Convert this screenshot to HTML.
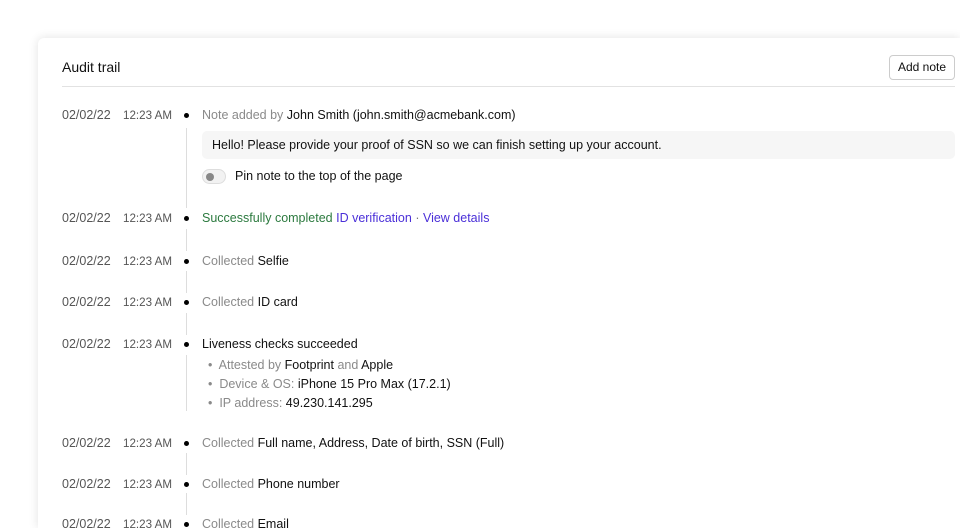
<!DOCTYPE html>
<html><head><style>
*{margin:0;padding:0;box-sizing:border-box}
html,body{width:960px;height:528px;overflow:hidden}
body{background:#fff;font-family:"Liberation Sans",sans-serif;font-size:12.5px;color:#111;position:relative}
.card{position:absolute;left:38px;top:38px;width:922px;height:490px;background:#fff;border-radius:6px 0 0 0;box-shadow:0 0 10px rgba(0,0,0,0.12)}
.a{position:absolute;white-space:nowrap}
.d{color:#555}
.t{font-size:11.6px;margin-top:0.5px}
.g{color:#8a8a8a}
.dot{position:absolute;left:184px;width:5px;height:5px;border-radius:50%;background:#000}
.ln{position:absolute;left:186px;width:1px;background:#ddd}
</style></head><body>
<div class="card"></div>
<div class="a" style="left:62px;top:59px;font-size:14px;color:#111">Audit trail</div>
<div class="a" style="left:889px;top:55px;width:66px;height:25px;border:1px solid #ccc;border-radius:4px;text-align:center;line-height:23px;font-size:12px">Add note</div>
<div class="a" style="left:62px;top:86px;width:893px;height:1px;background:#e2e2e2"></div>

<div class="ln" style="top:128px;height:80px"></div>
<div class="ln" style="top:229px;height:22px"></div>
<div class="ln" style="top:271px;height:22px"></div>
<div class="ln" style="top:313px;height:22px"></div>
<div class="ln" style="top:355px;height:56px"></div>
<div class="ln" style="top:453px;height:22px"></div>
<div class="ln" style="top:493px;height:22px"></div>

<div class="a d" style="left:62px;top:108px">02/02/22</div><div class="a d t" style="left:123px;top:108px">12:23 AM</div><div class="dot" style="top:113px"></div>
<div class="a" style="left:202px;top:108px"><span class="g">Note added by</span> John Smith (john.smith@acmebank.com)</div>
<div class="a" style="left:202px;top:131px;width:753px;height:28px;background:#f6f6f6;border-radius:5px;padding-left:10px;line-height:28px">Hello! Please provide your proof of SSN so we can finish setting up your account.</div>
<div class="a" style="left:202px;top:169px;width:24px;height:15px;border:1px solid #ddd;border-radius:8px;background:#f2f2f2"><div style="position:absolute;left:3px;top:3px;width:8px;height:8px;border-radius:50%;background:#888"></div></div>
<div class="a" style="left:235px;top:169px">Pin note to the top of the page</div>

<div class="a d" style="left:62px;top:211px">02/02/22</div><div class="a d t" style="left:123px;top:211px">12:23 AM</div><div class="dot" style="top:216px"></div>
<div class="a" style="left:202px;top:211px;color:#2c7a3f">Successfully completed <span style="color:#4a2fd8">ID verification</span> <span style="color:#777">·</span> <span style="color:#4a2fd8">View details</span></div>

<div class="a d" style="left:62px;top:254px">02/02/22</div><div class="a d t" style="left:123px;top:254px">12:23 AM</div><div class="dot" style="top:259px"></div>
<div class="a" style="left:202px;top:254px"><span class="g">Collected</span> Selfie</div>

<div class="a d" style="left:62px;top:295px">02/02/22</div><div class="a d t" style="left:123px;top:295px">12:23 AM</div><div class="dot" style="top:300px"></div>
<div class="a" style="left:202px;top:295px"><span class="g">Collected</span> ID card</div>

<div class="a d" style="left:62px;top:337px">02/02/22</div><div class="a d t" style="left:123px;top:337px">12:23 AM</div><div class="dot" style="top:342px"></div>
<div class="a" style="left:202px;top:337px">Liveness checks succeeded</div>
<div class="a" style="left:208px;top:358px"><span class="g">•&nbsp; Attested by</span> Footprint <span class="g">and</span> Apple</div>
<div class="a" style="left:208px;top:377px"><span class="g">•&nbsp; Device &amp; OS:</span> iPhone 15 Pro Max (17.2.1)</div>
<div class="a" style="left:208px;top:396px"><span class="g">•&nbsp; IP address:</span> 49.230.141.295</div>

<div class="a d" style="left:62px;top:436px">02/02/22</div><div class="a d t" style="left:123px;top:436px">12:23 AM</div><div class="dot" style="top:441px"></div>
<div class="a" style="left:202px;top:436px"><span class="g">Collected</span> Full name, Address, Date of birth, SSN (Full)</div>

<div class="a d" style="left:62px;top:477px">02/02/22</div><div class="a d t" style="left:123px;top:477px">12:23 AM</div><div class="dot" style="top:482px"></div>
<div class="a" style="left:202px;top:477px"><span class="g">Collected</span> Phone number</div>

<div class="a d" style="left:62px;top:517px;height:11px;overflow:hidden">02/02/22</div><div class="a d t" style="left:123px;top:517px;height:11px;overflow:hidden">12:23 AM</div><div class="dot" style="top:522px"></div>
<div class="a" style="left:202px;top:517px;height:11px;overflow:hidden"><span class="g">Collected</span> Email</div>
</body></html>
